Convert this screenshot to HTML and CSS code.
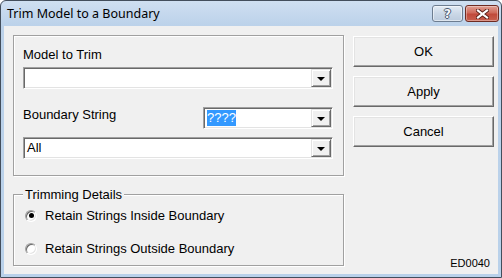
FILE: index.html
```html
<!DOCTYPE html>
<html lang="en">
<head>
    <meta charset="UTF-8">
    <title>Trim Model to a Boundary</title>
    <link rel="stylesheet" href="styles.css">
</head>
<body>
<div class="window">
    <div class="titlebar">
        <span class="title">Trim Model to a Boundary</span>
        <div class="caption-buttons">
            <button class="cap help"><span>?</span></button>
            <button class="cap close">
                <svg width="13" height="10" viewBox="0 0 13 10">
                    <path d="M2 1.5 L11 8.5 M11 1.5 L2 8.5" stroke="#5a2018" stroke-width="4" stroke-linecap="square" fill="none"/>
                    <path d="M2 1.5 L11 8.5 M11 1.5 L2 8.5" stroke="#fff" stroke-width="2.2" stroke-linecap="square" fill="none"/>
                </svg>
            </button>
        </div>
    </div>
    <div class="client">
        <div class="left">
            <div class="group model-group">
                <div class="label">Model to Trim</div>
                <div class="combo">
                    <span class="combo-text"></span>
                    <span class="drop"><span class="arrow"></span></span>
                </div>
                <div class="boundary-row">
                    <div class="label">Boundary String</div>
                    <div class="combo small">
                        <span class="combo-text"><span class="selected">????</span></span>
                        <span class="drop"><span class="arrow"></span></span>
                    </div>
                </div>
                <div class="combo all">
                    <span class="combo-text">All</span>
                    <span class="drop"><span class="arrow"></span></span>
                </div>
            </div>
            <div class="group details-group">
                <div class="group-title">Trimming Details</div>
                <div class="radio-row first">
                    <span class="radio checked"></span>
                    <span>Retain Strings Inside Boundary</span>
                </div>
                <div class="radio-row">
                    <span class="radio"></span>
                    <span>Retain Strings Outside Boundary</span>
                </div>
            </div>
        </div>
        <div class="right">
            <button class="btn">OK</button>
            <button class="btn">Apply</button>
            <button class="btn">Cancel</button>
            <div class="code">ED0040</div>
        </div>
    </div>
</div>
</body>
</html>
```

FILE: styles.css
```css
body {
    margin: 0;
    padding: 0;
    background: #fff;
    font-family: "Liberation Sans", Arial, sans-serif;
    font-size: 13px;
    color: #000;
}
.window {
    width: 502px;
    height: 278px;
    box-sizing: border-box;
    border: 1px solid #434e5c;
    border-radius: 6px 6px 0 0;
    background: linear-gradient(#cfdff1, #bcd2ea 24px, #b9d1ea);
    display: flex;
    flex-direction: column;
    overflow: hidden;
}
.titlebar {
    height: 25px;
    flex: none;
    display: flex;
    align-items: flex-start;
    padding: 0 2px 0 6px;
}
.title {
    font-family: "Noto Sans", "Liberation Sans", sans-serif;
    font-size: 12.5px;
    line-height: 16px;
    margin-top: 5px;
    color: #000;
}
.caption-buttons {
    margin-left: auto;
    margin-top: 4px;
    display: flex;
    gap: 2px;
}
.cap {
    height: 17px;
    padding: 0;
    border-radius: 3px;
    display: flex;
    align-items: center;
    justify-content: center;
}
.help {
    width: 31px;
    border: 1px solid #6d7d90;
    background: linear-gradient(#e4ecf5, #cbd8e7 50%, #bccbdd);
    box-shadow: inset 0 0 0 1px rgba(255, 255, 255, 0.5);
}
.help span {
    font-family: "DejaVu Sans", sans-serif;
    font-weight: bold;
    font-size: 12px;
    line-height: 12px;
    color: #f4f6f9;
    text-shadow: 1px 0 0 #4a5a70, -1px 0 0 #4a5a70, 0 1px 0 #4a5a70, 0 -1px 0 #4a5a70;
}
.close {
    width: 34px;
    border: 1px solid #6e2b22;
    background: linear-gradient(#e0a093, #cf6a5b 45%, #c04a3b 55%, #c9604e);
    box-shadow: inset 0 0 0 1px rgba(255, 255, 255, 0.35);
}
.client {
    flex: 1;
    margin: 0 3px 3px;
    background: #f0f0f0;
    display: grid;
    grid-template-columns: 331px 141px;
    column-gap: 9px;
    padding: 9px 4px 4px 9px;
}
.left {
    display: flex;
    flex-direction: column;
}
.group {
    border: 1px solid #a0a0a0;
    box-shadow: 1px 1px 0 #fff, inset 1px 1px 0 #fff;
    display: flex;
    flex-direction: column;
}
.model-group {
    height: 141px;
    box-sizing: border-box;
    padding: 11px 10px 0 9px;
}
.label {
    line-height: 15px;
}
.combo {
    height: 22px;
    box-sizing: border-box;
    border: 1px solid;
    border-color: #a0a0a0 #fff #fff #a0a0a0;
    box-shadow: inset 1px 1px 0 #696969, inset -1px -1px 0 #e3e3e3;
    background: #fff;
    display: flex;
    padding: 1px;
    margin-top: 5px;
}
.combo-text {
    flex: 1;
    line-height: 16px;
    padding: 1px 0 0 2px;
}
.selected {
    display: inline-block;
    background: #3399ff;
    color: #fff;
    line-height: 16px;
    margin-top: -1px;
}
.drop {
    width: 20px;
    box-sizing: border-box;
    border: 1px solid;
    border-color: #e3e3e3 #696969 #696969 #e3e3e3;
    box-shadow: inset 1px 1px 0 #fff, inset -1px -1px 0 #a0a0a0;
    background: #f0f0f0;
    display: flex;
    align-items: center;
    justify-content: center;
}
.arrow {
    width: 0;
    height: 0;
    border-left: 4px solid transparent;
    border-right: 4px solid transparent;
    border-top: 4px solid #000;
    margin-top: 1px;
}
.boundary-row {
    display: flex;
    justify-content: space-between;
    align-items: flex-start;
    margin-top: 18px;
}
.combo.small {
    width: 130px;
    margin-top: 0;
}
.combo.all {
    margin-top: 8px;
}
.details-group {
    margin-top: 18px;
    padding: 0 0 8px 11px;
}
.group-title {
    align-self: flex-start;
    line-height: 15px;
    margin: -8px 0 0 -2px;
    padding: 0 2px;
    background: #f0f0f0;
}
.radio-row {
    display: flex;
    align-items: center;
    height: 17px;
    gap: 8px;
    margin-top: 16px;
}
.radio-row.first {
    margin-top: 5px;
}
.radio {
    width: 12px;
    height: 12px;
    box-sizing: border-box;
    border-radius: 50%;
    border: 1px solid;
    border-color: #a0a0a0 #fff #fff #a0a0a0;
    box-shadow: inset 1px 1px 0 #696969, inset -1px -1px 0 #e3e3e3;
    background: #fff;
    display: flex;
    align-items: center;
    justify-content: center;
}
.radio.checked::after {
    content: "";
    width: 5px;
    height: 5px;
    border-radius: 50%;
    background: #000;
}
.right {
    display: flex;
    flex-direction: column;
    padding-top: 1px;
}
.btn {
    height: 31px;
    margin-bottom: 9px;
    padding: 0;
    font-family: "Liberation Sans", Arial, sans-serif;
    font-size: 13px;
    color: #000;
    background: #f0f0f0;
    border: 1px solid;
    border-color: #fff #696969 #696969 #fff;
    box-shadow: inset -1px -1px 0 #a0a0a0, inset 1px 1px 0 #e3e3e3;
}
.code {
    margin-top: auto;
    align-self: flex-end;
    margin-right: 4px;
    font-size: 11px;
    line-height: 13px;
}
```
